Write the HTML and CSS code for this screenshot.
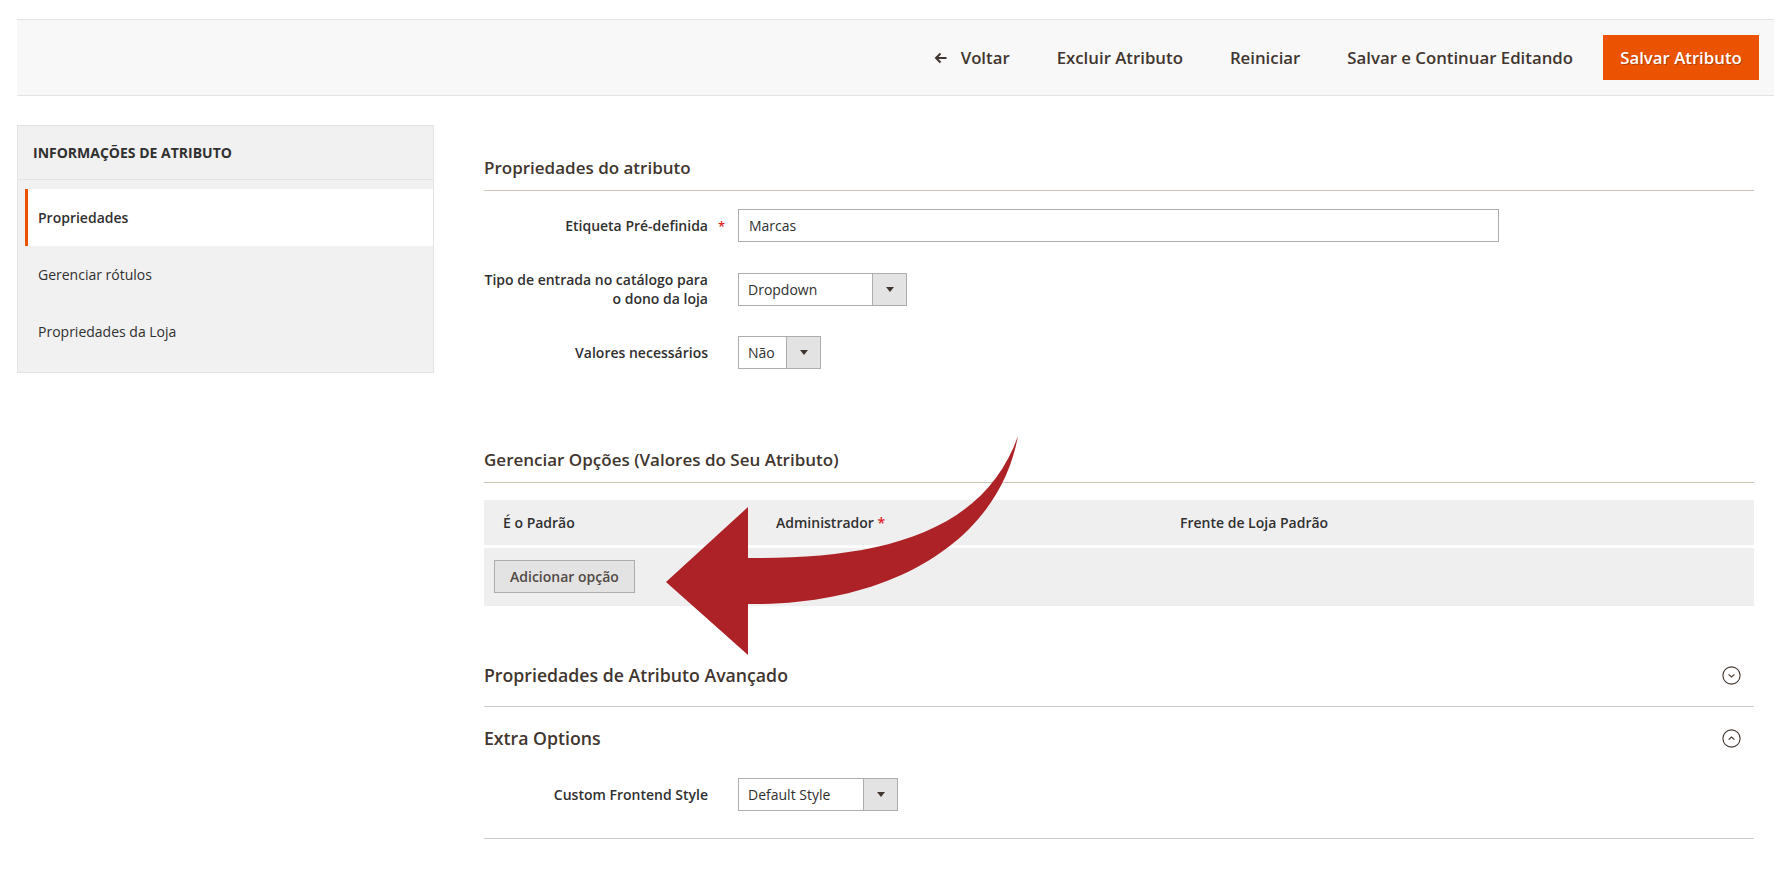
FILE: index.html
```html
<!DOCTYPE html>
<html lang="pt-BR">
<head>
<meta charset="utf-8">
<title>Atributo</title>
<link rel="stylesheet" href="styles.css">
</head>
<body>
<div class="page">
  <header class="actions-bar">
    <button class="act act-back">
      <svg class="back-icon" width="13" height="12" viewBox="0 0 13 12"><path d="M12.5 6H2M6.5 1.5L2 6l4.5 4.5" fill="none" stroke="#41362f" stroke-width="2"/></svg>
      <span>Voltar</span>
    </button>
    <button class="act">Excluir Atributo</button>
    <button class="act">Reiniciar</button>
    <button class="act">Salvar e Continuar Editando</button>
    <button class="act act-primary">Salvar Atributo</button>
  </header>

  <div class="columns">
    <aside class="nav">
      <div class="nav-title">Informações de Atributo</div>
      <ul class="nav-items">
        <li class="nav-item active">Propriedades</li>
        <li class="nav-item">Gerenciar rótulos</li>
        <li class="nav-item">Propriedades da Loja</li>
      </ul>
    </aside>

    <main class="content">
      <section class="fieldset">
        <h2 class="legend">Propriedades do atributo</h2>
        <div class="field">
          <label class="field-label required">Etiqueta Pré-definida</label>
          <div class="control"><input class="text-input" type="text" value="Marcas"></div>
        </div>
        <div class="field">
          <label class="field-label">Tipo de entrada no catálogo para o dono da loja</label>
          <div class="control">
            <div class="select select-type"><span class="select-value">Dropdown</span><span class="select-arrow"></span></div>
          </div>
        </div>
        <div class="field">
          <label class="field-label">Valores necessários</label>
          <div class="control">
            <div class="select select-yn"><span class="select-value">Não</span><span class="select-arrow"></span></div>
          </div>
        </div>
      </section>

      <section class="fieldset options">
        <h2 class="legend">Gerenciar Opções (Valores do Seu Atributo)</h2>
        <div class="opt-table">
          <div class="opt-head">
            <div class="opt-th">É o Padrão</div>
            <div class="opt-th">Administrador <span class="req">*</span></div>
            <div class="opt-th">Frente de Loja Padrão</div>
          </div>
          <div class="opt-body">
            <button class="btn-default">Adicionar opção</button>
          </div>
        </div>
      </section>

      <section class="collapsible">
        <div class="coll-title">
          <span>Propriedades de Atributo Avançado</span>
          <svg class="coll-icon" width="19" height="19" viewBox="0 0 19 19"><circle cx="9.5" cy="9.5" r="8.6" fill="none" stroke="#41362f" stroke-width="1.1"/><path d="M6.6 8.3l2.9 2.7 2.9-2.7" fill="none" stroke="#41362f" stroke-width="1.1"/></svg>
        </div>
      </section>

      <section class="collapsible open">
        <div class="coll-title">
          <span>Extra Options</span>
          <svg class="coll-icon" width="19" height="19" viewBox="0 0 19 19"><circle cx="9.5" cy="9.5" r="8.6" fill="none" stroke="#41362f" stroke-width="1.1"/><path d="M6.6 10.7l2.9-2.7 2.9 2.7" fill="none" stroke="#41362f" stroke-width="1.1"/></svg>
        </div>
        <div class="field field-extra">
          <label class="field-label">Custom Frontend Style</label>
          <div class="control">
            <div class="select select-style"><span class="select-value">Default Style</span><span class="select-arrow"></span></div>
          </div>
        </div>
      </section>
    </main>
  </div>
</div>

<svg class="callout-arrow" width="1785" height="880" viewBox="0 0 1785 880" aria-hidden="true">
  <path d="M748 507 L666 582 L748 655 L748 604 C885 606 998 545 1018 436 C982 538 870 559 748 558 Z" fill="#ad2227"/>
</svg>
</body>
</html>
```

FILE: styles.css
```css
* { box-sizing: border-box; }

html, body { margin: 0; padding: 0; }

body {
  position: relative;
  min-height: 880px;
  background: #fff;
  color: #303030;
  font-family: "Open Sans", "Liberation Sans", sans-serif;
  font-size: 14px;
}

.page { padding: 19px 11px 0 17px; }

/* top action bar */
.actions-bar {
  display: flex;
  justify-content: flex-end;
  align-items: center;
  height: 77px;
  padding-right: 15px;
  background: #f8f8f8;
  border-top: 1px solid #e3e3e3;
  border-bottom: 1px solid #e3e3e3;
}

.act {
  display: flex;
  align-items: center;
  margin-left: 47px;
  padding: 0;
  border: 0;
  background: none;
  color: #41362f;
  font-family: inherit;
  font-size: 16.8px;
  font-weight: 600;
  line-height: 20px;
}

.act-back .back-icon { margin-right: 14px; }

.act-primary {
  justify-content: center;
  width: 156px;
  height: 45px;
  margin-left: 30px;
  background: #eb5202;
  color: #fff;
  text-shadow: 1px 1px 0 rgba(0, 0, 0, .25);
}

/* columns */
.columns {
  display: flex;
  align-items: flex-start;
  margin-top: 29px;
}

/* side navigation */
.nav {
  flex: none;
  width: 417px;
  padding-bottom: 12px;
  background: #f1f1f1;
  border: 1px solid #e3e3e3;
}

.nav-title {
  display: flex;
  align-items: center;
  height: 54px;
  padding: 0 15px;
  border-bottom: 1px solid #e3e3e3;
  font-size: 14px;
  font-weight: 700;
  text-transform: uppercase;
  color: #303030;
}

.nav-items {
  margin: 0;
  padding: 9px 0 0;
  list-style: none;
}

.nav-item {
  margin-left: 7px;
  padding: 20px 10px;
  border-left: 3px solid transparent;
  line-height: 17px;
  color: #303030;
}

.nav-item.active {
  background: #fff;
  border-left-color: #eb5202;
  font-weight: 600;
}

/* main content */
.content {
  flex: 1;
  margin: 0 20px 0 50px;
  padding-top: 32px;
}

.legend {
  margin: 0 0 18px;
  padding-bottom: 11px;
  border-bottom: 1px solid #cac3b4;
  color: #41362f;
  font-size: 17px;
  font-weight: 600;
  line-height: 22px;
}

.field {
  display: grid;
  grid-template-columns: 224px 1fr;
  column-gap: 30px;
  align-items: center;
  margin-bottom: 28px;
}

.fieldset .field:last-child { margin-bottom: 0; }

.field-label {
  position: relative;
  text-align: right;
  font-size: 14px;
  font-weight: 600;
  line-height: 19px;
  color: #303030;
}

.field-label.required::after {
  content: "*";
  position: absolute;
  right: -17px;
  top: 1px;
  color: #e22626;
  font-size: 13px;
}

.text-input {
  display: block;
  width: 761px;
  height: 33px;
  padding: 0 10px;
  border: 1px solid #adadad;
  border-radius: 0;
  color: #303030;
  font-family: inherit;
  font-size: 14px;
}

.select {
  display: flex;
  height: 33px;
  background: #fff;
  border: 1px solid #adadad;
}

.select-type { width: 169px; }
.select-yn { width: 83px; }
.select-style { width: 160px; }

.select-value {
  flex: 1;
  padding: 0 9px;
  line-height: 31px;
  color: #303030;
  white-space: nowrap;
}

.select-arrow {
  display: flex;
  align-items: center;
  justify-content: center;
  width: 34px;
  background: #e3e3e3;
  border-left: 1px solid #adadad;
}

.select-arrow::after {
  content: "";
  border-left: 4px solid transparent;
  border-right: 4px solid transparent;
  border-top: 5px solid #41362f;
}

/* options table */
.options { margin-top: 80px; }

.options .legend { margin-bottom: 17px; }

.opt-head {
  display: grid;
  grid-template-columns: 273px 404px 1fr;
  height: 45px;
  background: #efefef;
  border-bottom: 3px solid #fff;
  box-sizing: content-box;
}

.opt-th {
  padding-left: 19px;
  font-weight: 600;
  line-height: 45px;
  color: #303030;
}

.req { color: #e22626; }

.opt-body {
  padding: 12px 10px 13px;
  background: #efefef;
}

.btn-default {
  display: block;
  height: 33px;
  padding: 0 15px;
  background: #e3e3e3;
  border: 1px solid #adadad;
  color: #514943;
  font-family: inherit;
  font-size: 14px;
  font-weight: 600;
}

/* collapsible sections */
.collapsible {
  margin-top: 38px;
  border-bottom: 1px solid #cccccc;
}

.collapsible + .collapsible { margin-top: 0; }

.coll-title {
  display: flex;
  align-items: center;
  justify-content: space-between;
  padding: 19px 13px 19px 0;
  color: #41362f;
  font-size: 17.7px;
  font-weight: 600;
  line-height: 24px;
}

.collapsible.open { padding-bottom: 27px; }

.field-extra { margin: 9px 0 0; }

/* overlay callout arrow */
.callout-arrow {
  position: absolute;
  top: 0;
  left: 0;
  pointer-events: none;
}
```
